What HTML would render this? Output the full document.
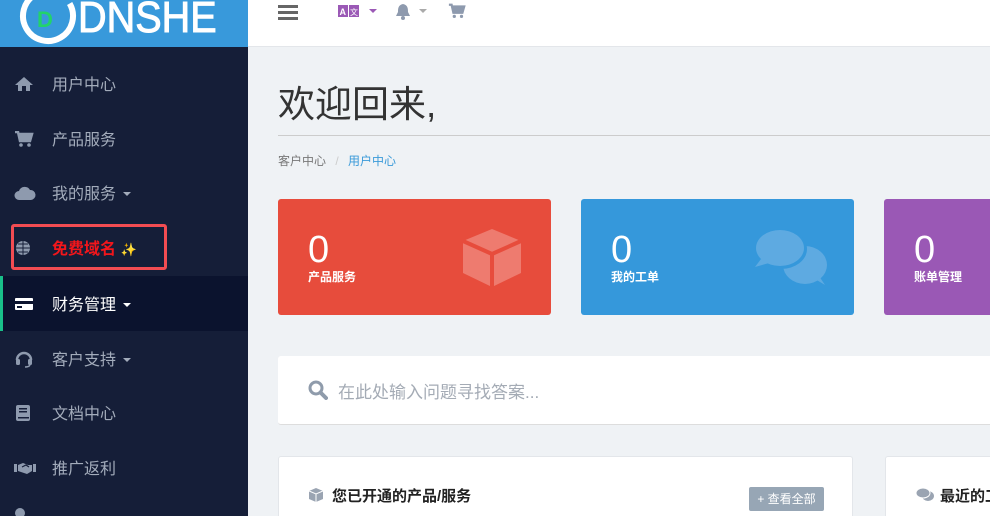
<!DOCTYPE html><html><head><meta charset="utf-8"><style>
*{margin:0;padding:0;box-sizing:border-box}
html,body{width:990px;height:516px;overflow:hidden}
body{background:#eff2f5;font-family:"Liberation Sans","Noto Sans CJK SC",sans-serif;position:relative}
.sb{position:absolute;left:0;top:0;width:248px;height:516px;background:#151e38;overflow:hidden}
.logo{height:47px;background:#3899db;position:relative;overflow:hidden}
.logo .t{position:absolute;left:78px;top:-7px;color:#fff;font-size:44px;letter-spacing:0px;transform:scaleX(0.9);transform-origin:left;-webkit-text-stroke:1px #fff}
.mi{position:absolute;left:0;width:248px;height:55px;color:#a3acbb;font-size:16px}
.mi svg{position:absolute;left:14px;top:50%;transform:translateY(-50%)}
.mi .tx{position:absolute;left:52px;top:50%;transform:translateY(-54%)}
.car{display:inline-block;width:0;height:0;border-left:4px solid transparent;border-right:4px solid transparent;border-top:4px solid currentColor;margin-left:7px;vertical-align:middle}
.top{position:absolute;left:248px;top:0;right:0;height:47px;background:#fff;border-bottom:1px solid #e3e6ea}
.card{position:absolute;top:199px;width:273px;height:116px;border-radius:3px;color:#fff}
.card .n{position:absolute;left:30px;top:32px;font-size:38px;line-height:1}
.card .l{position:absolute;left:30px;top:69px;font-size:12px;font-weight:bold}
</style></head><body>
<div class="sb">
<div class="logo">
<svg style="position:absolute;left:18px;top:-14px" width="60" height="60" viewBox="0 0 60 60"><circle cx="30" cy="30" r="25" fill="none" stroke="#fff" stroke-width="6" stroke-dasharray="125 32" transform="rotate(-30 30 30)"/><path d="M40 6 L46 12" stroke="#22d36a" stroke-width="5"/><text x="19" y="41" font-size="22" font-weight="bold" fill="#22d36a" font-family="Liberation Sans">D</text></svg>
<div class="t">DNSHE</div></div>
<div class="mi" style="top:56px"><svg width="20" height="16" viewBox="0 0 20 16"><path d="M10 1 L1 9 H4 V15 H8 V10 H12 V15 H16 V9 H19 Z" fill="#8e9aae"/></svg><span class="tx">用户中心</span></div>
<div class="mi" style="top:111px"><svg width="20" height="16" viewBox="0 0 20 16"><path d="M1 1 H4 L6 10 H16 L18 3 H5" fill="none" stroke="#8e9aae" stroke-width="2.5"/><rect x="5" y="3" width="12" height="7" fill="#8e9aae"/><circle cx="7" cy="14" r="1.8" fill="#8e9aae"/><circle cx="15" cy="14" r="1.8" fill="#8e9aae"/></svg><span class="tx">产品服务</span></div>
<div class="mi" style="top:165px"><svg width="22" height="16" viewBox="0 0 22 16"><path d="M5 15 A4.5 4.5 0 0 1 5 6 A6 6 0 0 1 16 5 A5 5 0 0 1 17 15 Z" fill="#8e9aae"/></svg><span class="tx">我的服务<span class="car"></span></span></div>
<div style="position:absolute;left:11px;top:224px;width:156px;height:46px;border:3px solid #f24c52;border-radius:3px"></div>
<div class="mi" style="top:220px"><svg width="20" height="16" viewBox="0 0 20 16"><circle cx="9" cy="8" r="7" fill="#8e9aae"/><path d="M2 8 H16 M9 1 V15 M4 4 H14 M4 12 H14" stroke="#151e38" stroke-width="1"/></svg><span class="tx" style="color:#f2161b;font-weight:bold">免费域名 <span style="font-size:13px;color:#ffd700">✨</span></span></div>
<div class="mi" style="top:276px;background:#0b132e;border-left:3px solid #19c08a"><svg style="left:11px" width="20" height="14" viewBox="0 0 20 14"><rect x="1" y="1" width="18" height="12" rx="1" fill="#fff"/><rect x="1" y="4" width="18" height="3" fill="#0b132e"/><rect x="3" y="9" width="5" height="2" fill="#0b132e"/></svg><span class="tx" style="left:49px;color:#fff">财务管理<span class="car"></span></span></div>
<div class="mi" style="top:331px"><svg width="20" height="18" viewBox="0 0 20 18"><path d="M3 10 A7 7 0 0 1 17 10" fill="none" stroke="#8e9aae" stroke-width="2.5"/><rect x="2" y="9" width="4" height="6" rx="1.5" fill="#8e9aae"/><rect x="14" y="9" width="4" height="6" rx="1.5" fill="#8e9aae"/><path d="M16 15 Q15 17 11 17" stroke="#8e9aae" stroke-width="1.5" fill="none"/></svg><span class="tx">客户支持<span class="car"></span></span></div>
<div class="mi" style="top:385px"><svg width="20" height="18" viewBox="0 0 20 18"><rect x="2" y="1" width="14" height="16" rx="2" fill="#8e9aae"/><rect x="5" y="4" width="8" height="1.5" fill="#151e38"/><rect x="5" y="7" width="8" height="1.5" fill="#151e38"/><rect x="4" y="13" width="11" height="1.5" fill="#151e38"/></svg><span class="tx">文档中心</span></div>
<div class="mi" style="top:440px"><svg width="22" height="14" viewBox="0 0 22 14"><rect x="0" y="3" width="3" height="8" fill="#8e9aae"/><rect x="19" y="3" width="3" height="8" fill="#8e9aae"/><path d="M4 4 L9 2 L14 4 L18 4 V10 L13 13 L4 10 Z" fill="#8e9aae"/><path d="M8 6 L12 4 L15 6" stroke="#151e38" stroke-width="1.2" fill="none"/></svg><span class="tx">推广返利</span></div>
<div style="position:absolute;left:14px;top:505px"><svg width="20" height="11" viewBox="0 0 20 11"><circle cx="6" cy="6" r="5" fill="#8e9aae"/></svg></div>
</div>
<div class="top">
<div style="position:absolute;left:30px;top:5px;width:20px;height:3px;background:#666;box-shadow:0 6px 0 #666,0 12px 0 #666"></div>
<svg style="position:absolute;left:90px;top:5px" width="22" height="12" viewBox="0 0 22 12"><rect x="0" y="0" width="10" height="12" fill="#9b59b6"/><rect x="11" y="0" width="10" height="12" fill="#9b59b6"/><text x="1.5" y="10" font-size="9" fill="#fff" font-family="Liberation Sans" font-weight="bold">A</text><text x="12" y="10" font-size="8" fill="#fff" font-family="Noto Sans CJK SC">文</text></svg>
<span class="car" style="position:absolute;left:114px;top:9px;color:#9b59b6"></span>
<svg style="position:absolute;left:147px;top:3px" width="16" height="17" viewBox="0 0 16 17"><path d="M8 1 C3 2 3 6 3 9 L1 13 H15 L13 9 C13 6 13 2 8 1 Z" fill="#8e9aae"/><circle cx="8" cy="15" r="2" fill="#8e9aae"/></svg>
<span class="car" style="position:absolute;left:164px;top:9px;color:#aaa"></span>
<svg style="position:absolute;left:200px;top:3px" width="18" height="16" viewBox="0 0 20 16"><path d="M1 1 H4 L6 10 H16 L18 3 H5" fill="none" stroke="#8e9aae" stroke-width="2.5"/><rect x="5" y="3" width="12" height="7" fill="#8e9aae"/><circle cx="7" cy="14" r="1.8" fill="#8e9aae"/><circle cx="15" cy="14" r="1.8" fill="#8e9aae"/></svg>
</div>
<div style="position:absolute;left:278px;top:74px;font-size:37px;color:#333">欢迎回来,</div>
<div style="position:absolute;left:278px;top:135px;right:0;height:1px;background:#ccc"></div>
<div style="position:absolute;left:278px;top:152px;font-size:12px;color:#777">客户中心 <span style="color:#ccc;margin:0 6px">/</span> <span style="color:#3a9ad9">用户中心</span></div>
<div class="card" style="left:278px;background:#e74c3c"><div class="n">0</div><div class="l">产品服务</div>
<svg style="position:absolute;left:181px;top:28px" width="66" height="62" viewBox="0 0 66 62"><path d="M33 2 L62 14 V46 L33 60 L4 46 V14 Z" fill="#ee7b6f"/><path d="M4 14 L33 27 L62 14 M33 27 V60" stroke="#e74c3c" stroke-width="4" fill="none"/></svg></div>
<div class="card" style="left:581px;background:#3598db"><div class="n">0</div><div class="l">我的工单</div>
<svg style="position:absolute;left:174px;top:30px" width="72" height="58" viewBox="0 0 72 58"><ellipse cx="50" cy="36" rx="22" ry="19" fill="#5eaae1"/><path d="M60 50 L70 56 L62 44Z" fill="#5eaae1"/><ellipse cx="26" cy="20" rx="26" ry="20" fill="#3598db"/><ellipse cx="25" cy="19" rx="24" ry="18" fill="#5eaae1"/><path d="M6 30 L0 38 L14 34Z" fill="#5eaae1"/></svg></div>
<div class="card" style="left:884px;width:106px;border-radius:3px 0 0 3px;background:#9a58b5"><div class="n">0</div><div class="l">账单管理</div></div>
<div style="position:absolute;left:278px;top:356px;width:712px;height:69px;background:#fff;border-bottom:1px solid #ddd;border-radius:3px 0 0 3px">
<svg style="position:absolute;left:30px;top:24px" width="20" height="20" viewBox="0 0 20 20"><circle cx="8" cy="8" r="6" fill="none" stroke="#8f9bab" stroke-width="3"/><path d="M12.5 12.5 L18 18" stroke="#8f9bab" stroke-width="4" stroke-linecap="round"/></svg>
<div style="position:absolute;left:60px;top:22px;font-size:17px;color:#a4abb5">在此处输入问题寻找答案...</div></div>
<div style="position:absolute;left:278px;top:456px;width:575px;height:60px;background:#fff;border:1px solid #e3e6ea;border-bottom:none;border-radius:3px 3px 0 0">
<svg style="position:absolute;left:30px;top:31px" width="14" height="14" viewBox="0 0 14 14"><path d="M7 0 L14 3 V11 L7 14 L0 11 V3 Z" fill="#9aa4b2"/><path d="M0 3 L7 6 L14 3 M7 6 V14" stroke="#fff" stroke-width="1" fill="none"/></svg>
<div style="position:absolute;left:53px;top:28px;font-size:15px;font-weight:bold;color:#222">您已开通的产品/服务</div>
<div style="position:absolute;left:470px;top:30px;width:75px;height:24px;background:#97a6b5;border-radius:2px;color:#fff;font-size:12px;line-height:24px;text-align:center">+ 查看全部</div></div>
<div style="position:absolute;left:885px;top:456px;width:105px;height:60px;background:#fff;border:1px solid #e3e6ea;border-right:none;border-bottom:none;border-radius:3px 0 0 0;overflow:hidden">
<svg style="position:absolute;left:30px;top:31px" width="18" height="14" viewBox="0 0 18 14"><ellipse cx="12" cy="8" rx="6" ry="5" fill="#9aa4b2"/><ellipse cx="7" cy="5" rx="7" ry="5" fill="#9aa4b2" stroke="#fff" stroke-width="1"/></svg>
<div style="position:absolute;left:54px;top:28px;font-size:15px;font-weight:bold;color:#222;white-space:nowrap">最近的工单</div></div>
</body></html>
